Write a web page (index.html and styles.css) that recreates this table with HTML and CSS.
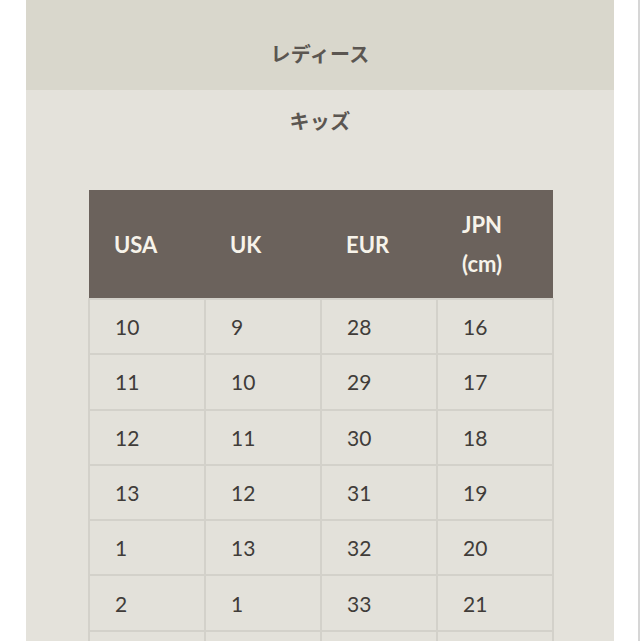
FILE: index.html
```html
<!DOCTYPE html>
<html lang="ja">
<head>
<meta charset="utf-8">
<link rel="stylesheet" href="styles.css">
</head>
<body>
<div class="page">
  <div class="panel">
    <div class="tab tab-ladies">レディース</div>
    <div class="tab tab-kids">キッズ</div>
    <div class="table-wrap">
      <table class="size-table">
        <thead>
          <tr>
            <th>USA</th>
            <th>UK</th>
            <th>EUR</th>
            <th>JPN<br>(cm)</th>
          </tr>
        </thead>
        <tbody>
          <tr><td>10</td><td>9</td><td>28</td><td>16</td></tr>
          <tr><td>11</td><td>10</td><td>29</td><td>17</td></tr>
          <tr><td>12</td><td>11</td><td>30</td><td>18</td></tr>
          <tr><td>13</td><td>12</td><td>31</td><td>19</td></tr>
          <tr><td>1</td><td>13</td><td>32</td><td>20</td></tr>
          <tr><td>2</td><td>1</td><td>33</td><td>21</td></tr>
          <tr><td></td><td></td><td></td><td></td></tr>
        </tbody>
      </table>
    </div>
  </div>
  <div class="edge"></div>
</div>
</body>
</html>
```
FILE: styles.css
```css
html, body {
  margin: 0;
  padding: 0;
  background: #ffffff;
  overflow: hidden;
}
.page {
  display: flex;
  height: 641px;
  overflow: hidden;
}
.panel {
  margin-left: 26px;
  width: 588px;
  background: #e4e2db;
  flex: none;
}
.edge {
  margin-left: 24px;
  width: 2px;
  background: #d6d6d6;
  flex: none;
}
.tab {
  text-align: center;
  font-family: "Noto Sans CJK JP", sans-serif;
  font-weight: 700;
  font-size: 20px;
  color: #5b5651;
  letter-spacing: 0.3px;
}
.tab-ladies {
  background: #d9d7cc;
  height: 90px;
  line-height: 108px;
}
.tab-kids {
  height: 62px;
  line-height: 62px;
}
.table-wrap {
  padding: 38px 0 0 62px;
}
.size-table {
  width: 466px;
  border-collapse: collapse;
  table-layout: fixed;
  font-family: "Lato", sans-serif;
}
.size-table th {
  background: #6b625c;
  color: #f7f3ea;
  font-weight: 700;
  font-size: 22px;
  text-align: left;
  padding: 0 0 0 25px;
  height: 108px;
  line-height: 39px;
  border: none;
}
.size-table td {
  border: 2px solid #d3d1ca;
  background: #e3e1da;
  color: #403c39;
  font-size: 21px;
  font-weight: 400;
  height: 53.3px;
  padding: 0 0 0 25px;
  text-align: left;
}
```
